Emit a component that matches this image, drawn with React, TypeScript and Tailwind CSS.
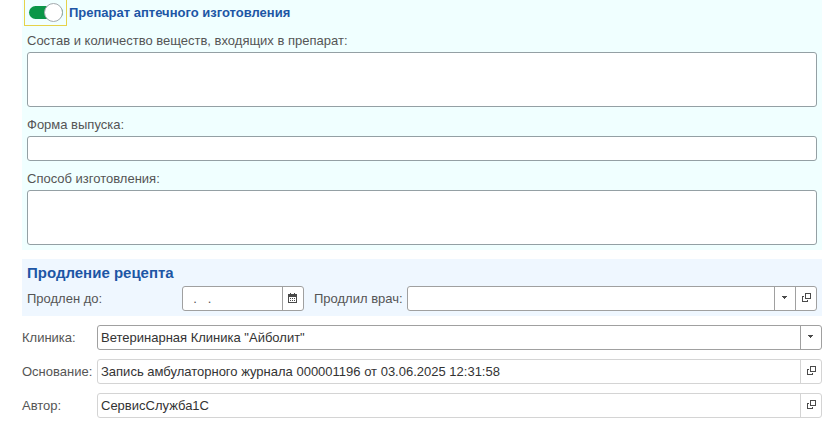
import { useState } from 'react';
import type { ReactNode } from 'react';

function CalendarIcon() {
  return (
    <svg width="10" height="10" viewBox="0 0 10 10" shapeRendering="crispEdges" aria-hidden="true">
      <path fill="#4a4a4a" d="M2 0h1v1h3V0h1v1h2v9H0V1h2z" />
      <path fill="#ffffff" d="M1 4h7v5H1z" />
      <path fill="#4a4a4a" d="M2 5h1v1H2zM4 5h1v1H4zM6 5h1v1H6zM2 7h1v1H2zM4 7h1v1H4zM6 7h1v1H6z" />
    </svg>
  );
}

function ArrowIcon() {
  return (
    <svg width="6" height="3" viewBox="0 0 6 3" shapeRendering="crispEdges" aria-hidden="true">
      <path fill="#4a4a4a" d="M0 0h5v1H4v1H3v1H2V2H1V1H0z" />
    </svg>
  );
}

function OpenIcon() {
  return (
    <svg width="9" height="9" viewBox="0 0 9 9" fill="none" stroke="#4a4a4a" shapeRendering="crispEdges" aria-hidden="true">
      <path d="M3.500 .5h5v5h-5z" />
      <path d="M2 3.500H.5v5h5V7" />
    </svg>
  );
}

type Action = { label: string; icon: ReactNode };

const calendar: Action = { label: 'Выбрать дату', icon: <CalendarIcon /> };
const choose: Action = { label: 'Выбрать', icon: <ArrowIcon /> };
const open: Action = { label: 'Открыть', icon: <OpenIcon /> };

type FieldProps = {
  id: string;
  value?: string;
  placeholder?: string;
  readOnly?: boolean;
  actions: Action[];
  className?: string;
};

function Field({ id, value, placeholder, readOnly, actions, className = 'flex-1' }: FieldProps) {
  const border = readOnly ? 'border-[#d4d4d4]' : 'border-[#a0a0a0]';

  return (
    <div className={`flex h-[25px] min-w-0 overflow-hidden rounded-[3px] border bg-white ${border} ${className}`}>
      <input
        id={id}
        type="text"
        defaultValue={value}
        placeholder={placeholder}
        readOnly={readOnly}
        className="min-w-0 flex-1 px-[3px] text-[#333333] outline-none placeholder:text-[#555555]"
      />
      {actions.map((action) => (
        <button
          key={action.label}
          type="button"
          aria-label={action.label}
          className={`flex w-[21px] shrink-0 items-center justify-center border-l pb-0.5 ${border}`}
        >
          {action.icon}
        </button>
      ))}
    </div>
  );
}

const details = [
  { id: 'clinic', label: 'Клиника:', value: 'Ветеринарная Клиника "Айболит"', readOnly: false, actions: [choose] },
  {
    id: 'reason',
    label: 'Основание:',
    value: 'Запись амбулаторного журнала 000001196 от 03.06.2025 12:31:58',
    readOnly: true,
    actions: [open],
  },
  { id: 'author', label: 'Автор:', value: 'СервисСлужба1С', readOnly: true, actions: [open] },
];

const areaStyle = 'block w-full resize-none rounded-[3px] border border-[#94a0a4] bg-white px-[3px] text-[#333333] outline-none';

export default function App() {
  const [compounded, setCompounded] = useState(true);

  return (
    <form className="bg-white pr-2 pb-2 pl-[22px] font-['Liberation_Sans',Arial,sans-serif] text-[13px] leading-4 text-[#555555]">
      <section className="bg-[#f0ffff] px-[5px] pb-[5px]">
        <label className="-ml-[3px] flex h-[26px] items-center gap-[2px] font-bold text-[#1d56a5]">
          <span className="flex h-full w-[43px] items-center border border-t-0 border-[#e6d24a] pl-1">
            <input
              type="checkbox"
              role="switch"
              checked={compounded}
              onChange={(e) => setCompounded(e.target.checked)}
              className="peer sr-only"
            />
            <span className="flex h-[13px] w-[34px] items-center rounded-full bg-[#b5b5b5] peer-checked:justify-end peer-checked:bg-[#0c9648]">
              <span className="size-[19px] shrink-0 rounded-full border border-[#a3a9ad] bg-white" />
            </span>
          </span>
          Препарат аптечного изготовления
        </label>

        <label htmlFor="composition" className="block pt-[7px] pb-[3px]">
          Состав и количество веществ, входящих в препарат:
        </label>
        <textarea id="composition" className={`h-[55px] ${areaStyle}`} />

        <label htmlFor="release" className="block pt-[10px] pb-[3px]">
          Форма выпуска:
        </label>
        <input id="release" type="text" className={`h-[25px] ${areaStyle}`} />

        <label htmlFor="method" className="block pt-[10px] pb-[3px]">
          Способ изготовления:
        </label>
        <textarea id="method" className={`h-[55px] ${areaStyle}`} />
      </section>

      <section className="mt-[9px] bg-[#eff7ff] px-[5px] pt-1 pb-[5px]">
        <h2 className="text-[15px] leading-5 font-bold text-[#1d56a5]">Продление рецепта</h2>
        <div className="mt-[3px] flex items-center">
          <label htmlFor="until" className="w-[155px] shrink-0">
            Продлен до:
          </label>
          <Field id="until" placeholder="  .   ." actions={[calendar]} className="w-[122px] shrink-0" />
          <label htmlFor="doctor" className="w-[103px] shrink-0 pl-[10px]">
            Продлил врач:
          </label>
          <Field id="doctor" actions={[choose, open]} />
        </div>
      </section>

      <div className="mt-[9px] flex flex-col gap-[9px]">
        {details.map((row) => (
          <div key={row.id} className="flex items-center">
            <label htmlFor={row.id} className="w-[75px] shrink-0">
              {row.label}
            </label>
            <Field id={row.id} value={row.value} readOnly={row.readOnly} actions={row.actions} />
          </div>
        ))}
      </div>
    </form>
  );
}
